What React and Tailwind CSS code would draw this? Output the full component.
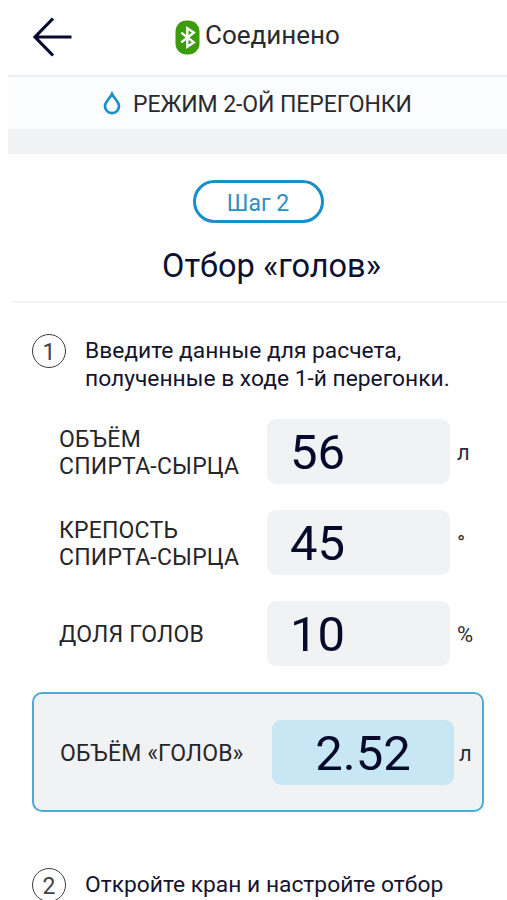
import React from 'react';

const fields = [
    { id: 'volume', label: ['ОБЪЁМ', 'СПИРТА-СЫРЦА'], value: '56', unit: 'л' },
    { id: 'strength', label: ['КРЕПОСТЬ', 'СПИРТА-СЫРЦА'], value: '45', unit: '°' },
    { id: 'share', label: ['ДОЛЯ ГОЛОВ'], value: '10', unit: '%' },
];

function BackIcon() {
    return (
        <svg width="42" height="42" viewBox="0 0 42 42" fill="none" stroke="#070a2c" strokeWidth="3.2">
            <path d="M39.5 21H3M21 2.5L3 21L21 39.5" />
        </svg>
    );
}

function BluetoothIcon() {
    return (
        <svg width="25" height="35" viewBox="0 0 25 35" fill="none">
            <rect x="0.5" y="0.5" width="24" height="34" rx="11" fill="#3c9c0c" />
            <path d="M6.3 12.6L12.5 17.5L6.3 22.4M12.5 17.5L18.8 12.6L12.3 8.2V26.8L18.8 22.4L12.5 17.5" stroke="#fff" strokeWidth="2.4" />
        </svg>
    );
}

function DropIcon() {
    return (
        <svg width="18" height="24" viewBox="0 0 18 24" fill="none" stroke="#1a8ecb" strokeWidth="2.7">
            <path d="M9 3C7.2 7 2 10.6 2 15.2A7 7 0 0 0 16 15.2C16 10.6 10.8 7 9 3Z" />
        </svg>
    );
}

function StepNumber({ children }) {
    return (
        <div className="flex h-[34px] w-[34px] shrink-0 items-center justify-center rounded-full border-[1.5px] border-[#3c3c40] pt-[3px] text-[23px] leading-none text-[#444]">
            {children}
        </div>
    );
}

function Field({ label, value, unit }) {
    return (
        <div className="flex h-[65px] items-center">
            <div className="w-[208px] whitespace-nowrap pt-[2px] text-[23px] leading-[27px] tracking-[0.2px] text-[#26262a]">
                {label.map((line) => (
                    <div key={line}>{line}</div>
                ))}
            </div>
            <div className="flex h-[65px] w-[183px] items-center rounded-[9px] bg-[#f0f2f4] pl-[23px] pt-px text-[49px] leading-none text-[#050a2a]">
                {value}
            </div>
            <span className="ml-[7px] pt-[3px] text-[22px] leading-none text-[#2e2e32]">{unit}</span>
        </div>
    );
}

export default function App() {
    return (
        <div className="h-[900px] w-[507px] overflow-hidden bg-white pl-2 font-['Roboto',sans-serif]">
            <header className="flex h-[77px] items-center border-b-2 border-[#eeeff0] pb-px">
                <div className="ml-6 w-[143px]">
                    <BackIcon />
                </div>
                <BluetoothIcon />
                <span className="ml-[5px] -mt-[5px] text-[26px] leading-none text-[#2a2a2e]">Соединено</span>
            </header>

            <div className="flex h-[52px] items-center bg-[#fbfcfe] pl-[95px]">
                <DropIcon />
                <span className="ml-[12px] pt-[2px] text-[23px] leading-none tracking-[-0.08px] text-[#2a2a2e]">РЕЖИМ 2-ОЙ ПЕРЕГОНКИ</span>
            </div>
            <div className="h-[25px] bg-[#f0f2f4]" />

            <section className="ml-1 flex h-[149px] flex-col items-center border-b-2 border-[#f4f4f5] pt-[26px] pr-[3px]">
                <div className="flex h-[43px] w-[131px] items-center justify-center rounded-full border-3 border-[#1a8ecb] pt-[3px] text-[23px] leading-none text-[#2c8fc5]">
                    Шаг 2
                </div>
                <h1 className="mt-[26px] pl-[27px] text-[32.5px] leading-[34px] text-[#0c1030]">Отбор «голов»</h1>
            </section>

            <main className="pl-6">
                <div className="flex pt-[31px]">
                    <StepNumber>1</StepNumber>
                    <p className="ml-[19px] whitespace-nowrap pt-[3px] text-[22.8px] leading-[28px] text-[#14142e]">
                        Введите данные для расчета,
                        <br />
                        полученные в ходе 1-й перегонки.
                    </p>
                </div>

                <div className="mt-[26px] flex flex-col gap-[26px] pl-[27px]">
                    {fields.map((field) => (
                        <Field key={field.id} {...field} />
                    ))}
                </div>

                <div className="mt-[26px] flex h-[120px] w-[452px] items-center rounded-[10px] border-2 border-[#4fa9d6] bg-[#f0f2f4]">
                    <div className="w-[238px] whitespace-nowrap pl-[26px] pt-[2px] text-[23px] leading-none tracking-[0.1px] text-[#26262a]">
                        ОБЪЁМ «ГОЛОВ»
                    </div>
                    <div className="flex h-[65px] w-[182px] items-center justify-center rounded-[9px] bg-[#c8e7f4] pt-[3px] text-[49px] leading-none text-[#050a2a]">
                        2.52
                    </div>
                    <span className="ml-[5px] pt-[3px] text-[22px] leading-none text-[#2e2e32]">л</span>
                </div>

                <div className="flex pt-[56px]">
                    <StepNumber>2</StepNumber>
                    <p className="ml-[19px] whitespace-nowrap pt-[3px] text-[22.8px] leading-[28px] text-[#14142e]">
                        Откройте кран и настройте отбор
                    </p>
                </div>
            </main>
        </div>
    );
}
